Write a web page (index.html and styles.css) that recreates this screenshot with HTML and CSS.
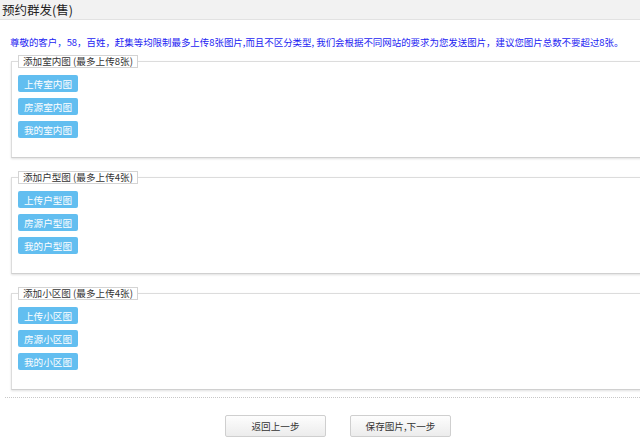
FILE: index.html
```html
<!DOCTYPE html>
<html lang="zh-CN">
<head>
    <meta charset="UTF-8">
    <title>预约群发(售)</title>
    <link rel="stylesheet" href="styles.css">
</head>
<body>
    <div class="title-bar">预约群发(售)</div>
    <p class="notice">尊敬的客户，58，百姓，赶集等均限制最多上传8张图片,而且不区分类型, 我们会根据不同网站的要求为您发送图片，建议您图片总数不要超过8张。</p>

    <!-- 室内图 -->
    <fieldset class="pic-group">
        <legend>添加室内图 (最多上传8张)</legend>
        <button class="btn-pic">上传室内图</button>
        <button class="btn-pic">房源室内图</button>
        <button class="btn-pic">我的室内图</button>
    </fieldset>

    <!-- 户型图 -->
    <fieldset class="pic-group">
        <legend>添加户型图 (最多上传4张)</legend>
        <button class="btn-pic">上传户型图</button>
        <button class="btn-pic">房源户型图</button>
        <button class="btn-pic">我的户型图</button>
    </fieldset>

    <!-- 小区图 -->
    <fieldset class="pic-group">
        <legend>添加小区图 (最多上传4张)</legend>
        <button class="btn-pic">上传小区图</button>
        <button class="btn-pic">房源小区图</button>
        <button class="btn-pic">我的小区图</button>
    </fieldset>

    <div class="divider"></div>
    <div class="actions">
        <button class="btn-step">返回上一步</button>
        <button class="btn-step">保存图片,下一步</button>
    </div>
</body>
</html>
```
FILE: styles.css
```css
body {
    margin: 0;
    padding: 0;
    background: #fff;
    font-family: "Noto Sans CJK SC", "Liberation Sans", sans-serif;
    font-size: 9.6px;
    color: #333;
    overflow: hidden;
}
.title-bar {
    height: 19px;
    line-height: 19px;
    padding-left: 2px;
    font-size: 12.5px;
    color: #222;
    background-color: #f2f2f2;
    border-bottom: 1px solid #e2e2e2;
}
.notice {
    margin: 14px 0 5px 10px;
    line-height: 16px;
    font-size: 9.45px;
    color: #1c1cf2;
    white-space: nowrap;
}
.pic-group {
    margin: 0 -20px 13px 11px;
    padding: 7px 6px 19px;
    border: 1px solid #dcdcdc;
    border-bottom-color: #d0d0d0;
    box-shadow: 0 1px 2px rgba(0, 0, 0, 0.12);
}
.pic-group legend {
    margin: 0;
    padding: 0 4px;
    line-height: 11px;
    border: 1px solid #d4d4d4;
    background: #fff;
}
.btn-pic {
    display: block;
    width: 60px;
    height: 17px;
    margin-bottom: 6px;
    padding: 0;
    border: none;
    border-radius: 2px;
    background-color: #62bef0;
    color: #fff;
    font-family: inherit;
    font-size: 9.6px;
    cursor: pointer;
}
.btn-pic:last-child {
    margin-bottom: 0;
}
.divider {
    margin: -6px 0 0 5px;
    border-top: 1px dotted #c8c8c8;
}
.actions {
    display: flex;
    justify-content: center;
    gap: 24px;
    padding: 17px 0 0 36px;
}
.btn-step {
    width: 101px;
    height: 22px;
    padding: 0;
    border: 1px solid #cfcfcf;
    border-radius: 2px;
    background: linear-gradient(#fdfdfd, #ececec);
    color: #333;
    font-family: inherit;
    font-size: 9.6px;
    cursor: pointer;
}
```
